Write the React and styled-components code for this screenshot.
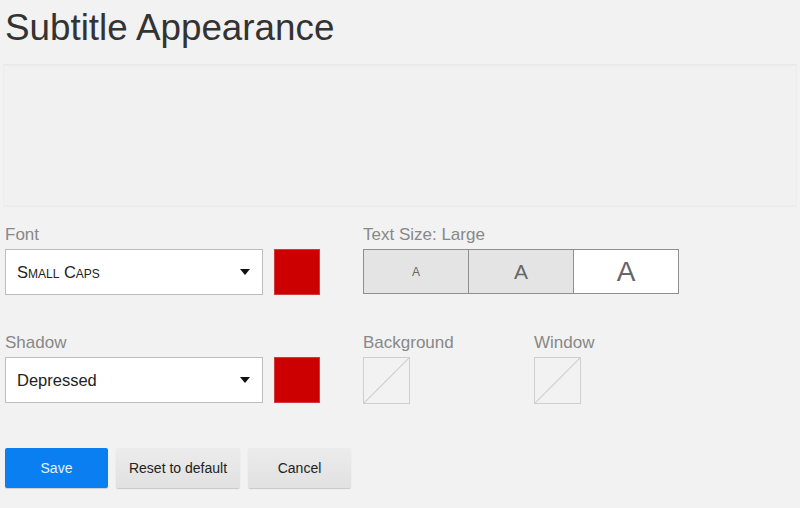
import React, { useState } from 'react';
import styled, { createGlobalStyle } from 'styled-components';

const GlobalStyle = createGlobalStyle`
  html, body {
    margin: 0;
    padding: 0;
    background: #f2f2f2;
  }
  body {
    font-family: "Liberation Sans", Arial, sans-serif;
  }
`;

function Arrow() {
  return (
    <svg width="10" height="6" viewBox="0 0 10 6">
      <path d="M0 0 L10 0 L5 6 Z" fill="#111" />
    </svg>
  );
}

function Select({ value, smallCaps }) {
  return (
    <SelectBox>
      <SelectText $smallCaps={smallCaps}>{value}</SelectText>
      <Arrow />
    </SelectBox>
  );
}

function EmptySwatch() {
  return (
    <EmptyBox>
      <svg width="45" height="45" viewBox="0 0 45 45">
        <line x1="0" y1="45" x2="45" y2="0" stroke="#cfcfcf" strokeWidth="1.2" />
      </svg>
    </EmptyBox>
  );
}

function App() {
  const [size, setSize] = useState(2);
  const sizes = [12, 21, 28];

  return (
    <Page>
      <GlobalStyle />
      <Title>Subtitle Appearance</Title>
      <Preview />
      <Row>
        <Field>
          <Label>Font</Label>
          <Controls>
            <Select value="Small Caps" smallCaps />
            <Swatch />
          </Controls>
        </Field>
        <Field>
          <Label>Text Size: Large</Label>
          <Segments>
            {sizes.map((s, i) => (
              <Segment key={i} $active={i === size} $size={s} onClick={() => setSize(i)}>
                A
              </Segment>
            ))}
          </Segments>
        </Field>
      </Row>
      <Row $second>
        <Field>
          <Label>Shadow</Label>
          <Controls>
            <Select value="Depressed" />
            <Swatch />
          </Controls>
        </Field>
        <Field $width="171px">
          <Label>Background</Label>
          <EmptySwatch />
        </Field>
        <Field $width="120px">
          <Label>Window</Label>
          <EmptySwatch />
        </Field>
      </Row>
      <Buttons>
        <Button $primary $width="103px">Save</Button>
        <Button $width="124px">Reset to default</Button>
        <Button $width="103px">Cancel</Button>
      </Buttons>
    </Page>
  );
}

const Page = styled.div`
  width: 800px;
  height: 508px;
  box-sizing: border-box;
  padding: 10px 5px 0;
  display: flex;
  flex-direction: column;
  overflow: hidden;
`;

const Title = styled.h1`
  margin: 0;
  font-size: 36.8px;
  line-height: 36px;
  font-weight: normal;
  color: #333;
`;

const Preview = styled.div`
  margin: 18px -2px 0;
  height: 141px;
  border: 1px solid #ededed;
  border-top: 1px solid #e9e9e9;
  box-shadow: inset 0 5px 0 -4px #ebebeb, inset 0 -5px 0 -4px #ececec;
  background: #f1f1f1;
`;

const Row = styled.div`
  display: flex;
  margin-top: ${p => (p.$second ? '39px' : '19px')};
`;

const Field = styled.div`
  display: flex;
  flex-direction: column;
  flex-shrink: 0;
  width: ${p => p.$width || '358px'};
`;

const Label = styled.div`
  font-size: 17px;
  line-height: 18px;
  color: #888;
  margin-bottom: 5px;
`;

const Controls = styled.div`
  display: flex;
  gap: 11px;
`;

const SelectBox = styled.div`
  width: 258px;
  height: 46px;
  box-sizing: border-box;
  border: 1px solid #bdbdbd;
  background: #fff;
  display: flex;
  align-items: center;
  justify-content: space-between;
  padding: 0 12px 0 11px;
`;

const SelectText = styled.span`
  font-size: 16.5px;
  color: #222;
  font-variant: ${p => (p.$smallCaps ? 'small-caps' : 'normal')};
`;

const Swatch = styled.div`
  width: 46px;
  height: 46px;
  box-sizing: border-box;
  background: #cc0000;
  border: 1px solid #d43a3a;
`;

const Segments = styled.div`
  display: flex;
  width: 316px;
  height: 45px;
  box-sizing: border-box;
  border: 1px solid #8f8f8f;
`;

const Segment = styled.div`
  flex: 1;
  display: flex;
  align-items: center;
  justify-content: center;
  background: ${p => (p.$active ? '#fff' : '#e4e4e4')};
  color: #666;
  font-size: ${p => p.$size}px;
  & + & {
    border-left: 1px solid #8f8f8f;
  }
`;

const EmptyBox = styled.div`
  width: 47px;
  height: 47px;
  box-sizing: border-box;
  border: 1px solid #cfcfcf;
  svg {
    display: block;
  }
`;

const Buttons = styled.div`
  display: flex;
  gap: 8px;
  margin-top: 44px;
`;

const Button = styled.button`
  width: ${p => p.$width};
  height: 40px;
  border: none;
  border-radius: 2px;
  font-family: "Liberation Sans", Arial, sans-serif;
  font-size: 14px;
  color: ${p => (p.$primary ? '#e8f2ff' : '#222')};
  background: ${p =>
    p.$primary ? '#0a7ff2' : 'linear-gradient(#ececec, #e1e1e1)'};
  box-shadow: ${p =>
    p.$primary ? '0 1px 1px rgba(0,0,0,0.15)' : '0 1px 1px rgba(0,0,0,0.18)'};
  padding: 0;
  cursor: pointer;
`;

export default App;
